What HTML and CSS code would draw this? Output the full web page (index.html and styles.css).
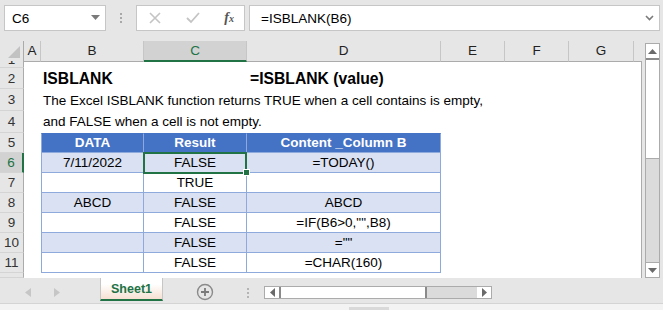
FILE: index.html
```html
<!DOCTYPE html>
<html>

<head>
  <link rel="stylesheet" href="styles.css">
</head>

<body>
  <div class="topbar">
    <div class="namebox">
      <span>C6</span>
      <svg class="caret" width="9" height="5" viewBox="0 0 9 5"><path d="M0 0H9L4.5 5Z" fill="#7a7a7a"/></svg>
    </div>
    <div class="vdots"><i></i><i></i><i></i></div>
    <div class="fxbox">
      <svg width="12" height="12" viewBox="0 0 12 12"><path d="M1 1L11 11M11 1L1 11" stroke="#c4c4c4" stroke-width="1.6"/></svg>
      <svg width="14" height="12" viewBox="0 0 14 12"><path d="M1 6L5 10L13 1" stroke="#c4c4c4" stroke-width="1.8" fill="none"/></svg>
      <span class="fx">f<small>x</small></span>
    </div>
    <div class="formula">
      <span>=ISBLANK(B6)</span>
      <svg width="9" height="6" viewBox="0 0 9 6"><path d="M1 1L4.5 4.5L8 1" stroke="#7a7a7a" stroke-width="1.6" fill="none"/></svg>
    </div>
  </div>

  <div class="sheet">
    <div class="grid">
      <div class="row colhead">
        <div class="corner"><svg width="12" height="12" viewBox="0 0 12 12"><path d="M12 0V12H0Z" fill="#c2c2c2"/></svg></div>
        <div>A</div><div>B</div><div class="sel">C</div><div>D</div><div>E</div><div>F</div><div>G</div><div class="last"></div>
      </div>

      <div class="row r1">
        <div class="rh"><span>1</span></div><div></div><div></div><div></div><div></div><div></div><div></div><div></div><div class="last"></div>
      </div>

      <div class="row r2">
        <div class="rh">2</div><div></div><div class="title">ISBLANK</div><div></div><div class="title syn">=ISBLANK (value)</div><div></div><div></div><div></div><div class="last"></div>
      </div>

      <div class="row r3">
        <div class="rh">3</div><div></div><div class="para">The Excel ISBLANK function returns TRUE when a cell contains is empty,</div><div></div><div></div><div></div><div></div><div></div><div class="last"></div>
      </div>

      <div class="row r4">
        <div class="rh">4</div><div></div><div class="para">and FALSE when a cell is not empty.</div><div></div><div></div><div></div><div></div><div></div><div class="last"></div>
      </div>

      <div class="row r5">
        <div class="rh">5</div><div></div><div class="tc th first">DATA</div><div class="tc th">Result</div><div class="tc th">Content _Column B</div><div></div><div></div><div></div><div class="last"></div>
      </div>

      <div class="row">
        <div class="rh on">6</div><div></div><div class="tc band first">7/11/2022</div><div class="tc band active">FALSE</div><div class="tc band">=TODAY()</div><div></div><div></div><div></div><div class="last"></div>
      </div>

      <div class="row">
        <div class="rh">7</div><div></div><div class="tc first"></div><div class="tc">TRUE</div><div class="tc"></div><div></div><div></div><div></div><div class="last"></div>
      </div>

      <div class="row">
        <div class="rh">8</div><div></div><div class="tc band first">ABCD</div><div class="tc band">FALSE</div><div class="tc band">ABCD</div><div></div><div></div><div></div><div class="last"></div>
      </div>

      <div class="row">
        <div class="rh">9</div><div></div><div class="tc first"></div><div class="tc">FALSE</div><div class="tc">=IF(B6&gt;0,"",B8)</div><div></div><div></div><div></div><div class="last"></div>
      </div>

      <div class="row">
        <div class="rh">10</div><div></div><div class="tc band first"></div><div class="tc band">FALSE</div><div class="tc band">=""</div><div></div><div></div><div></div><div class="last"></div>
      </div>

      <div class="row">
        <div class="rh">11</div><div></div><div class="tc first"></div><div class="tc">FALSE</div><div class="tc">=CHAR(160)</div><div></div><div></div><div></div><div class="last"></div>
      </div>

      <div class="row r12">
        <div class="rh"></div><div></div><div></div><div></div><div></div><div></div><div></div><div></div><div class="last"></div>
      </div>
    </div>

    <div class="vscroll">
      <div class="vbar">
        <div class="btn"><svg width="9" height="5" viewBox="0 0 9 5"><path d="M0 5H9L4.5 0Z" fill="#6a6a6a"/></svg></div>
        <div class="vthumb"></div>
        <div class="track"></div>
        <div class="btn"><svg width="9" height="5" viewBox="0 0 9 5"><path d="M0 0H9L4.5 5Z" fill="#6a6a6a"/></svg></div>
      </div>
    </div>
  </div>

  <div class="tabs">
    <div class="nav">
      <svg width="6" height="9" viewBox="0 0 6 9"><path d="M6 0V9L0 4.5Z" fill="#c6c6c6"/></svg>
      <svg width="6" height="9" viewBox="0 0 6 9"><path d="M0 0V9L6 4.5Z" fill="#c6c6c6"/></svg>
    </div>
    <div class="tab">Sheet1</div>
    <div class="add">
      <svg width="18" height="18" viewBox="0 0 18 18"><circle cx="9" cy="9" r="7.5" fill="none" stroke="#8a8a8a" stroke-width="1.4"/><path d="M9 5V13M5 9H13" stroke="#7a7a7a" stroke-width="1.8"/></svg>
    </div>
    <div class="vdots small"><i></i><i></i><i></i></div>
    <div class="hbar">
      <div class="btn"><svg width="5" height="9" viewBox="0 0 5 9"><path d="M5 0V9L0 4.5Z" fill="#6a6a6a"/></svg></div>
      <div class="hthumb"></div>
      <div class="track"></div>
      <div class="btn"><svg width="5" height="9" viewBox="0 0 5 9"><path d="M0 0V9L5 4.5Z" fill="#6a6a6a"/></svg></div>
    </div>
  </div>

  <div class="status"><div class="blk"></div></div>
</body>

</html>
```

FILE: styles.css
```css
body {
  margin: 0;
  width: 663px;
  height: 310px;
  overflow: hidden;
  background-color: #E6E6E6;
  font-family: "Liberation Sans", Arial, sans-serif;
  font-size: 13.5px;
  color: #000;
}

/* formula bar */
.topbar {
  height: 41px;
  box-sizing: border-box;
  padding: 5px 3px 0 4px;
  display: flex;
  align-items: flex-start;
}

.namebox,
.fxbox,
.formula {
  height: 26px;
  box-sizing: border-box;
  background-color: #fff;
  border: 1px solid #C6C6C6;
  display: flex;
  align-items: center;
}

.namebox {
  width: 102px;
  padding: 0 5px 0 7px;
  justify-content: space-between;
}

.caret {
  margin-top: -2px;
}

.vdots {
  width: 30px;
  height: 26px;
  display: flex;
  flex-direction: column;
  align-items: center;
  justify-content: center;
  gap: 2px;
}

.vdots i {
  width: 2px;
  height: 2px;
  background-color: #A8A8A8;
}

.fxbox {
  width: 109px;
  padding: 0 10px 0 12px;
  justify-content: space-between;
}

.fx {
  font-family: "Liberation Serif", serif;
  font-style: italic;
  font-weight: bold;
  font-size: 14px;
  color: #555;
}

.fx small {
  font-size: 10px;
}

.formula {
  flex: 1;
  margin-left: 4px;
  padding: 0 5px 0 11px;
  justify-content: space-between;
}

/* sheet grid */
.sheet {
  display: flex;
  height: 237px;
}

.grid {
  width: 642px;
  background-color: #fff;
}

.row {
  display: grid;
  grid-template-columns: 24px 17px 103px 103px 194px 64px 64px 65px 8px;
  height: 20px;
}

.row > div {
  box-sizing: border-box;
  white-space: nowrap;
  line-height: 20px;
}

.row .last {
  border-right: 1px solid #ABABAB;
}

.colhead {
  height: 20px;
  background-color: #E6E6E6;
}

.colhead > div {
  text-align: center;
  line-height: 19px;
  color: #222;
  border-right: 1px solid #C6C6C6;
  border-bottom: 1px solid #ABABAB;
}

.colhead .corner {
  border-right-color: #ABABAB;
  display: flex;
  align-items: flex-end;
  justify-content: flex-end;
  padding: 0 3px 3px 0;
}

.colhead .sel {
  background-color: #D2D2D2;
  color: #217346;
  border-bottom: 2px solid #217346;
}

.colhead .last {
  border-right: none;
}

.rh {
  background-color: #E6E6E6;
  border-right: 1px solid #ABABAB;
  border-bottom: 1px solid #D4D4D4;
  text-align: center;
  color: #333;
  overflow: hidden;
}

.rh.on {
  background-color: #D2D2D2;
  color: #217346;
  border-right: 2px solid #217346;
}

.r1 {
  height: 7px;
}

.r1 .rh span {
  display: block;
  margin-top: -11px;
  line-height: 20px;
}

.r2 {
  height: 21px;
}

.r3,
.r4 {
  height: 22px;
}

.r12 {
  height: 5px;
}

.r2 > div {
  line-height: 21px;
}

.r3 > div,
.r4 > div {
  line-height: 22px;
}

.title {
  font-weight: bold;
  font-size: 15.7px;
  padding-left: 2px;
}

.title.syn {
  padding-left: 3px;
}

.para {
  padding-left: 2px;
}

.r3 .para {
  padding-top: 1px;
  line-height: 21px !important;
}

/* table */
.tc {
  text-align: center;
  line-height: 19px !important;
  border-right: 1px solid #8EA9DB;
  border-bottom: 1px solid #8EA9DB;
}

.tc.first {
  border-left: 1px solid #8EA9DB;
}

.tc.band {
  background-color: #D9E1F2;
}

.tc.th {
  background-color: #4472C4;
  color: #fff;
  font-weight: bold;
  border-top: 1px solid #4472C4;
  line-height: 18px !important;
}

.tc.active {
  position: relative;
}

.tc.active::after {
  content: "";
  position: absolute;
  left: -1px;
  top: -1px;
  right: -1px;
  bottom: -2px;
  border: 2px solid #217346;
}

.tc.active::before {
  content: "";
  position: absolute;
  right: -4px;
  bottom: -4px;
  width: 5px;
  height: 5px;
  background-color: #217346;
  border: 1px solid #fff;
  z-index: 1;
}

/* scrollbars */
.vscroll {
  flex: 1;
  padding: 2px 0 0 3px;
}

.vbar {
  width: 15px;
  height: 235px;
  box-sizing: border-box;
  border: 1px solid #ABABAB;
  display: flex;
  flex-direction: column;
  background-color: #fff;
}

.vbar .btn {
  height: 14px;
  display: flex;
  align-items: center;
  justify-content: center;
  background-color: #fff;
}

.vthumb {
  height: 101px;
  box-sizing: border-box;
  border-top: 2px solid #8A8A8A;
  border-bottom: 1px solid #ABABAB;
  background-color: #fff;
}

.vbar .track,
.hbar .track {
  flex: 1;
  background-color: #DBDBDB;
}

.vbar .btn:last-child {
  border-top: 1px solid #ABABAB;
}

/* sheet tabs */
.tabs {
  height: 25px;
  display: flex;
  align-items: flex-start;
}

.nav {
  width: 100px;
  box-sizing: border-box;
  padding: 10px 0 0 25px;
  display: flex;
  gap: 23px;
}

.tab {
  width: 63px;
  height: 23px;
  box-sizing: border-box;
  border-left: 1px solid #C6C6C6;
  border-right: 1px solid #C6C6C6;
  border-bottom: 2px solid #217346;
  background: linear-gradient(#fff 30%, #F6E0D2);
  color: #217346;
  font-weight: bold;
  font-size: 12.5px;
  text-align: center;
  line-height: 22px;
}

.add {
  width: 84px;
  padding: 5px 0 0 33px;
  box-sizing: border-box;
}

.vdots.small {
  width: 17px;
  height: 12px;
  margin-top: 9px;
  gap: 2px;
  align-items: flex-start;
}

.vdots.small i {
  background-color: #B4B4B4;
}

.hbar {
  width: 228px;
  height: 13px;
  margin-top: 8px;
  box-sizing: border-box;
  border: 1px solid #ABABAB;
  display: flex;
  background-color: #fff;
}

.hbar .btn {
  width: 14px;
  display: flex;
  align-items: center;
  justify-content: center;
}

.hthumb {
  width: 148px;
  box-sizing: border-box;
  border-left: 2px solid #8A8A8A;
  border-right: 2px solid #8A8A8A;
  background-color: #fff;
}

.status {
  height: 7px;
  background-color: #F3F3F3;
  border-top: 1px solid #D4D4D4;
}

.status .blk {
  margin-left: 349px;
  margin-top: 3px;
  width: 40px;
  height: 4px;
  background-color: #D9D9D9;
}
```
